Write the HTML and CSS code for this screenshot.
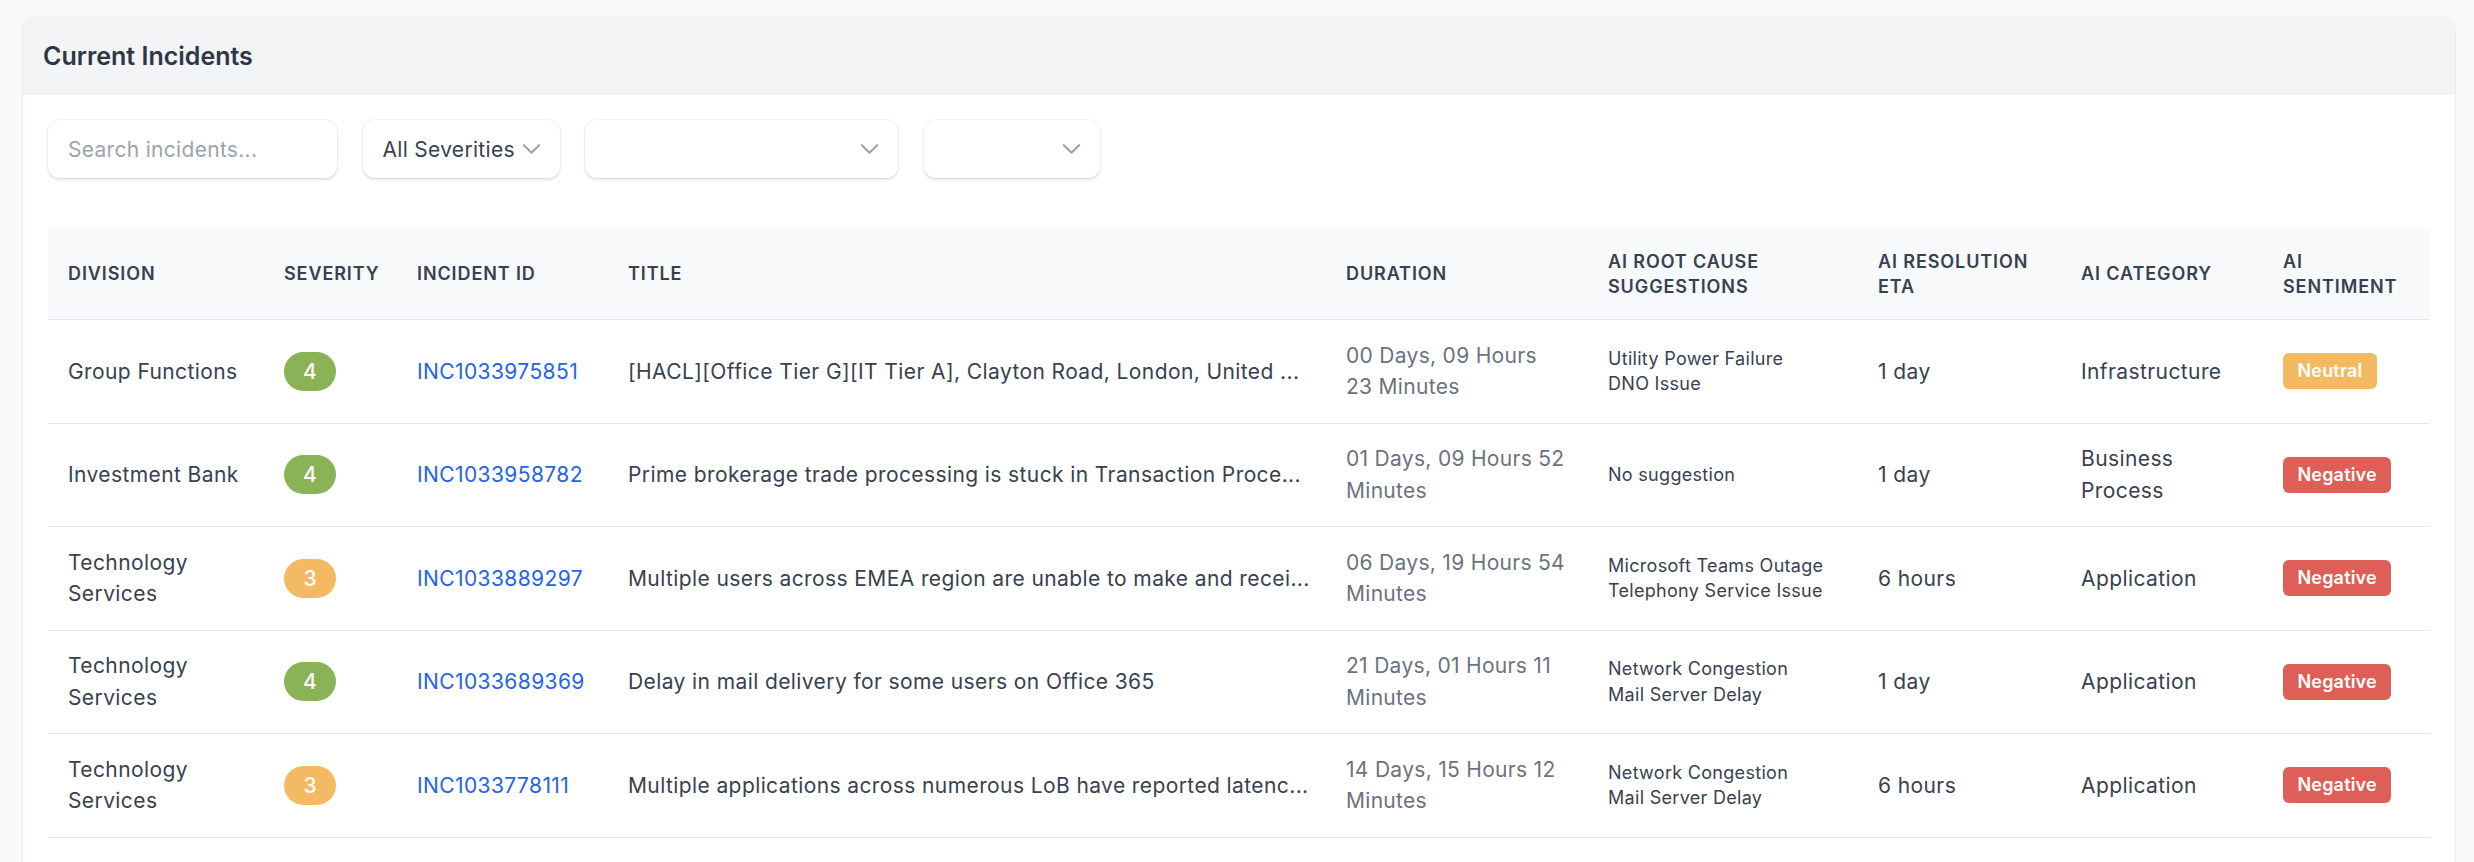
FILE: index.html
```html
<!DOCTYPE html>
<html lang="en">
<head>
<meta charset="utf-8">
<title>Current Incidents</title>
<link rel="stylesheet" href="styles.css">
</head>
<body>
<section class="card">
  <header class="card-header">
    <h2 class="card-title">Current Incidents</h2>
  </header>
  <div class="card-body">
    <div class="filters">
      <input class="field search" type="text" placeholder="Search incidents...">
      <div class="select sel-sev">
        <select class="field select-input"><option>All Severities</option></select>
        <svg class="chev" viewBox="0 0 20 12" aria-hidden="true"><path d="M2 2l8 8 8-8"/></svg>
      </div>
      <div class="select sel-a">
        <select class="field select-input"><option></option></select>
        <svg class="chev" viewBox="0 0 20 12" aria-hidden="true"><path d="M2 2l8 8 8-8"/></svg>
      </div>
      <div class="select sel-b">
        <select class="field select-input"><option></option></select>
        <svg class="chev" viewBox="0 0 20 12" aria-hidden="true"><path d="M2 2l8 8 8-8"/></svg>
      </div>
    </div>

    <table class="incidents">
      <colgroup>
        <col class="c-div"><col class="c-sev"><col class="c-id"><col class="c-title"><col class="c-dur">
        <col class="c-root"><col class="c-eta"><col class="c-cat"><col class="c-sent">
      </colgroup>
      <thead>
        <tr>
          <th>Division</th>
          <th>Severity</th>
          <th>Incident ID</th>
          <th>Title</th>
          <th>Duration</th>
          <th>AI Root Cause Suggestions</th>
          <th>AI Resolution ETA</th>
          <th>AI Category</th>
          <th>AI Sentiment</th>
        </tr>
      </thead>
      <tbody>
        <tr>
          <td>Group Functions</td>
          <td><span class="sev sev-4">4</span></td>
          <td><a class="inc" href="#">INC1033975851</a></td>
          <td class="title">[HACL][Office Tier G][IT Tier A], Clayton Road, London, United ...</td>
          <td class="dur">00 Days, 09 Hours 23 Minutes</td>
          <td class="root"><div>Utility Power Failure</div><div>DNO Issue</div></td>
          <td>1 day</td>
          <td>Infrastructure</td>
          <td><span class="sent neutral">Neutral</span></td>
        </tr>
        <tr>
          <td>Investment Bank</td>
          <td><span class="sev sev-4">4</span></td>
          <td><a class="inc" href="#">INC1033958782</a></td>
          <td class="title">Prime brokerage trade processing is stuck in Transaction Proce...</td>
          <td class="dur">01 Days, 09 Hours 52 Minutes</td>
          <td class="root"><div>No suggestion</div></td>
          <td>1 day</td>
          <td>Business Process</td>
          <td><span class="sent negative">Negative</span></td>
        </tr>
        <tr>
          <td>Technology Services</td>
          <td><span class="sev sev-3">3</span></td>
          <td><a class="inc" href="#">INC1033889297</a></td>
          <td class="title">Multiple users across EMEA region are unable to make and recei...</td>
          <td class="dur">06 Days, 19 Hours 54 Minutes</td>
          <td class="root"><div>Microsoft Teams Outage</div><div>Telephony Service Issue</div></td>
          <td>6 hours</td>
          <td>Application</td>
          <td><span class="sent negative">Negative</span></td>
        </tr>
        <tr>
          <td>Technology Services</td>
          <td><span class="sev sev-4">4</span></td>
          <td><a class="inc" href="#">INC1033689369</a></td>
          <td class="title">Delay in mail delivery for some users on Office 365</td>
          <td class="dur">21 Days, 01 Hours 11 Minutes</td>
          <td class="root"><div>Network Congestion</div><div>Mail Server Delay</div></td>
          <td>1 day</td>
          <td>Application</td>
          <td><span class="sent negative">Negative</span></td>
        </tr>
        <tr>
          <td>Technology Services</td>
          <td><span class="sev sev-3">3</span></td>
          <td><a class="inc" href="#">INC1033778111</a></td>
          <td class="title">Multiple applications across numerous LoB have reported latenc...</td>
          <td class="dur">14 Days, 15 Hours 12 Minutes</td>
          <td class="root"><div>Network Congestion</div><div>Mail Server Delay</div></td>
          <td>6 hours</td>
          <td>Application</td>
          <td><span class="sent negative">Negative</span></td>
        </tr>
      </tbody>
    </table>
  </div>
</section>
</body>
</html>
```
FILE: styles.css
```css
* { box-sizing: border-box; }

html, body {
  margin: 0;
  background: #f8f9fb;
}

body {
  padding: 17.5px 19px 40px 23px;
  font-family: Inter, "Noto Sans", "Liberation Sans", sans-serif;
  color: #374151;
}

.card {
  background: #ffffff;
  border-radius: 12px;
  box-shadow: 0 0 0 1px rgba(17, 24, 39, 0.035), 0 1px 3px rgba(17, 24, 39, 0.06);
  overflow: hidden;
}

.card-header {
  background: #f3f4f6;
  padding: 18.75px 20px;
}

.card-title {
  margin: 0;
  font-size: 25px;
  line-height: 40px;
  font-weight: 600;
  color: #2d3748;
}

.card-body {
  padding: 25px 25px 40px 25px;
}

.filters {
  display: flex;
  gap: 25.5px;
  margin-bottom: 51px;
}

.field {
  height: 58px;
  border: none;
  border-radius: 12px;
  background: #ffffff;
  box-shadow: 0 0 0 1px rgba(17, 24, 39, 0.035), 0 1.5px 3px rgba(17, 24, 39, 0.12);
  font-family: inherit;
  font-size: 21px;
  letter-spacing: 0.3px;
  color: #374151;
  padding: 0 20px;
  outline: none;
}

.search { width: 289px; }
.search::placeholder { color: #9ca3af; }

.select { position: relative; }
.sel-sev { width: 197px; }
.sel-a { width: 313px; }
.sel-b { width: 176px; }

.select-input {
  appearance: none;
  -webkit-appearance: none;
  width: 100%;
  padding-right: 44px;
}

.chev {
  position: absolute;
  right: 19px;
  top: 23px;
  width: 19px;
  height: 12px;
  fill: none;
  stroke: #9ca3af;
  stroke-width: 2.2;
  stroke-linecap: round;
  stroke-linejoin: round;
  pointer-events: none;
}

.incidents {
  width: 100%;
  table-layout: fixed;
  border-collapse: collapse;
}

.c-div { width: 216px; }
.c-sev { width: 133px; }
.c-id { width: 211px; }
.c-title { width: 718px; }
.c-dur { width: 262px; }
.c-root { width: 270px; }
.c-eta { width: 203px; }
.c-cat { width: 202px; }
.c-sent { width: 167px; }

.incidents th {
  background: #f8f9fb;
  text-align: left;
  vertical-align: middle;
  padding: 19.5px 20px;
  font-size: 18px;
  line-height: 25.5px;
  font-weight: 600;
  letter-spacing: 0.05em;
  text-transform: uppercase;
  color: #374151;
  border-bottom: 1px solid #e5e7eb;
}

.incidents td {
  padding: 19.75px 20px;
  vertical-align: middle;
  font-size: 21px;
  line-height: 31.5px;
  letter-spacing: 0.4px;
  color: #374151;
  border-bottom: 1px solid #e5e7eb;
}

.incidents td.title {
  white-space: nowrap;
  overflow: hidden;
}

.incidents td.dur {
  color: #6b7280;
  letter-spacing: 0.3px;
}

.incidents td.root {
  font-size: 18px;
  line-height: 25.5px;
  letter-spacing: 0.3px;
}

.inc {
  color: #2563eb;
  text-decoration: none;
}

.sev {
  display: inline-flex;
  align-items: center;
  justify-content: center;
  min-width: 52px;
  height: 39px;
  padding: 0 18px;
  border-radius: 20px;
  color: #ffffff;
  font-size: 21px;
  font-weight: 500;
  letter-spacing: 0;
  vertical-align: middle;
}

.sev-4 { background: #8ab256; }
.sev-3 { background: #f3ba63; }

.sent {
  display: inline-block;
  padding: 6px 14.5px;
  border-radius: 6px;
  color: #ffffff;
  font-size: 18px;
  line-height: 24px;
  font-weight: 600;
  letter-spacing: 0.01em;
  vertical-align: middle;
}

.neutral { background: #f3ba62; }
.negative { background: #de5f57; }
```
